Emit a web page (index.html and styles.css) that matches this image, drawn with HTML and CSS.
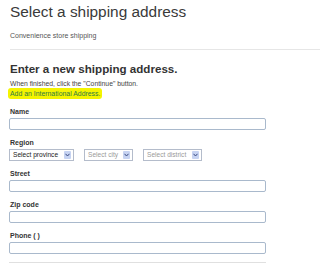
FILE: index.html
```html
<!DOCTYPE html>
<html>
<head>
<meta charset="utf-8">
<link rel="stylesheet" href="styles.css">
</head>
<body>
<div class="page">
  <h1 class="title">Select a shipping address</h1>
  <p class="subtitle">Convenience store shipping</p>
  <hr class="rule">
  <h2 class="heading">Enter a new shipping address.</h2>
  <p class="note">When finished, click the "Continue" button.</p>
  <p class="intl"><a class="intl-link">Add an International Address.</a></p>

  <div class="field">
    <div class="label">Name</div>
    <div class="input"></div>
  </div>
  <div class="field">
    <div class="label">Region</div>
    <div class="selects">
      <div class="select w1"><span class="sel-text">Select province</span><span class="arrow"><svg width="5" height="4" viewBox="0 0 5 4"><path d="M0.5 0.8 L2.5 3 L4.5 0.8" fill="none" stroke="#3a4a80" stroke-width="1"/></svg></span></div>
      <div class="select w2 disabled"><span class="sel-text">Select city</span><span class="arrow"><svg width="5" height="4" viewBox="0 0 5 4"><path d="M0.5 0.8 L2.5 3 L4.5 0.8" fill="none" stroke="#3a4a80" stroke-width="1"/></svg></span></div>
      <div class="select w3 disabled"><span class="sel-text">Select district</span><span class="arrow"><svg width="5" height="4" viewBox="0 0 5 4"><path d="M0.5 0.8 L2.5 3 L4.5 0.8" fill="none" stroke="#3a4a80" stroke-width="1"/></svg></span></div>
    </div>
  </div>
  <div class="field">
    <div class="label">Street</div>
    <div class="input"></div>
  </div>
  <div class="field">
    <div class="label">Zip code</div>
    <div class="input"></div>
  </div>
  <div class="field">
    <div class="label">Phone ( )</div>
    <div class="input"></div>
  </div>
  <div class="bottom-rule"></div>
</div>
</body>
</html>
```

FILE: styles.css
```css
html, body {
  margin: 0;
  padding: 0;
  background: #ffffff;
}
body {
  font-family: "Liberation Sans", Arial, sans-serif;
  color: #333333;
  overflow: hidden;
}
.page {
  padding: 3px 0 0 10px;
}
.title {
  margin: 0;
  font-size: 15.4px;
  line-height: 18px;
  font-weight: normal;
  color: #3a3a3a;
}
.subtitle {
  margin: 10px 0 0 0;
  font-size: 7px;
  line-height: 9px;
  color: #555555;
}
.rule {
  margin: 9px 0 0 0;
  border: 0;
  height: 1px;
  background: #e6e6e6;
}
.heading {
  margin: 12px 0 0 0;
  font-size: 11.6px;
  line-height: 14px;
  font-weight: bold;
  color: #333333;
}
.note {
  margin: 2.5px 0 0 0;
  font-size: 6.8px;
  line-height: 9px;
  color: #444444;
}
.intl {
  margin: 0;
  font-size: 6.9px;
  line-height: 11px;
}
.intl-link {
  display: inline-block;
  margin-left: -2px;
  padding: 0 2px;
  background: #f4f400;
  color: #2f7a45;
  border-radius: 3px;
  text-decoration: none;
}
.field {
  margin-top: 8px;
}
.label {
  font-size: 7px;
  line-height: 9px;
  font-weight: bold;
  color: #333333;
  margin-bottom: 2px;
}
.input {
  width: 255px;
  height: 10px;
  margin-left: -1px;
  border: 1px solid #a9b9cc;
  border-radius: 2px;
  background: #ffffff;
}
.selects {
  display: flex;
  gap: 10px;
  margin-left: -1px;
}
.select {
  height: 10px;
  border: 1px solid #b4bccb;
  background: #ffffff;
  display: flex;
  align-items: center;
  justify-content: space-between;
  padding: 0 2px 0 3px;
  box-sizing: content-box;
}
.w1 { width: 58px; }
.w2 { width: 42px; }
.w3 { width: 52px; }
.sel-text {
  font-size: 6.6px;
  line-height: 10px;
  color: #222222;
  white-space: nowrap;
}
.disabled .sel-text {
  color: #9a9a9a;
}
.arrow {
  width: 7px;
  height: 8px;
  background: #c6d3f2;
  border-radius: 1px;
  display: flex;
  align-items: center;
  justify-content: center;
}
.arrow svg {
  display: block;
}
.bottom-rule {
  margin-top: 8px;
  margin-left: -1px;
  width: 257px;
  height: 1px;
  background: #e0e0e0;
}
```
